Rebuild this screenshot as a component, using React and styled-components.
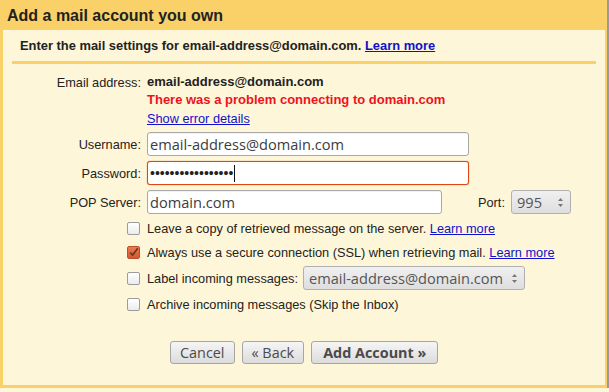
import React from "react";
import styled, { createGlobalStyle } from "styled-components";

const GlobalStyle = createGlobalStyle`
  html, body { margin: 0; padding: 0; background: #fef6d8; }
  body { font-family: "Liberation Sans", Arial, sans-serif; }
`;

const Frame = styled.div`
  width: 609px;
  height: 388px;
  box-sizing: border-box;
  background: #f9d168;
  border-right: 2px solid #9a9a9a;
  display: flex;
  flex-direction: column;
`;

const Header = styled.h1`
  margin: 0;
  height: 30px;
  padding-left: 7px;
  font-size: 16px;
  font-weight: bold;
  line-height: 31px;
  color: #222;
`;

const Panel = styled.div`
  margin: 0 2px 3px 3px;
  flex: 1;
  background: #fef6d8;
  color: #222;
  font-size: 12.75px;
`;

const Intro = styled.div`
  padding: 8px 0 0 17px;
  height: 23px;
  line-height: 16px;
  font-size: 12.9px;
  font-weight: bold;
`;

const Divider = styled.hr`
  margin: 0 9px;
  border: 0;
  height: 3px;
  background: #f9d168;
`;

const Link = styled.a`
  color: #1111cc;
  text-decoration: underline;
  cursor: pointer;
  font-weight: ${({ $bold }) => ($bold ? "bold" : "normal")};
`;

const Form = styled.div`
  display: grid;
  grid-template-columns: 138px auto;
  column-gap: 6px;
  align-items: center;
  padding-top: 9px;
`;

const Label = styled.div`
  text-align: right;
  white-space: nowrap;
`;

const Text = styled.div`
  grid-column: 2;
  height: ${({ $h }) => $h || 18}px;
  line-height: 18px;
  font-size: ${({ $bold }) => ($bold ? "13px" : "inherit")};
  font-weight: ${({ $bold }) => ($bold ? "bold" : "normal")};
  color: ${({ $error }) => ($error ? "#ee1122" : "inherit")};
`;

const FieldRow = styled.div`
  grid-column: 2;
  display: flex;
  align-items: center;
  margin-top: ${({ $top }) => $top || 5}px;
`;

const LabelCell = styled(Label)`
  margin-top: ${({ $top }) => $top || 5}px;
`;

const Field = styled.div`
  box-sizing: border-box;
  width: ${({ $w }) => $w}px;
  height: 24px;
  padding: 0 2px;
  display: flex;
  align-items: center;
  background: #fff;
  border: 1px solid ${({ $focus }) => ($focus ? "#dd4814" : "#a8a8a8")};
  border-radius: 3px;
  box-shadow: ${({ $focus }) => ($focus ? "0 0 1px #dd4814" : "inset 0 1px 1px rgba(0,0,0,0.06)")};
  font-family: "Open Sans", "DejaVu Sans", sans-serif;
  font-size: 14.6px;
  color: #3c3c3c;
`;

const Dots = styled.span`
  font-family: "Liberation Sans", Arial, sans-serif;
  font-size: 14px;
  color: #222;
`;

const Caret = styled.span`
  display: inline-block;
  width: 1px;
  height: 17px;
  margin-left: 1px;
  background: #111;
`;

const PortLabel = styled.span`
  margin: 0 6px 0 36px;
`;

const Select = styled.div`
  box-sizing: border-box;
  width: ${({ $w }) => $w}px;
  height: 24px;
  margin-left: ${({ $ml }) => $ml || 0}px;
  padding: 0 6px 0 5px;
  display: flex;
  align-items: center;
  justify-content: space-between;
  background: linear-gradient(#f0f0f0, #dedede);
  border: 1px solid #b0b0b0;
  border-radius: 3px;
  font-family: "Open Sans", "DejaVu Sans", sans-serif;
  font-size: 14.6px;
  color: #555;
`;

const Options = styled.div`
  display: flex;
  flex-direction: column;
  gap: 4px;
  margin: 4px 0 0 124px;
`;

const CheckRow = styled.label`
  display: flex;
  align-items: center;
  gap: 7px;
  min-height: 20px;
`;

const Box = styled.span`
  box-sizing: border-box;
  width: 13px;
  height: 13px;
  flex: none;
  border-radius: 2px;
  border: 1px solid ${({ $on }) => ($on ? "#b9502a" : "#9c9c9c")};
  background: ${({ $on }) => ($on ? "linear-gradient(#ec7a52, #d9572c)" : "linear-gradient(#ffffff, #ececec)")};
  display: flex;
  align-items: center;
  justify-content: center;
  overflow: visible;
`;

const Actions = styled.div`
  display: flex;
  gap: 7px;
  margin: 27px 0 0 167px;
`;

const Button = styled.button`
  height: 23px;
  padding: 0 ${({ $pad }) => $pad || 9}px;
  border: 1px solid #a6a6a6;
  border-radius: 3px;
  background: linear-gradient(#f5f5f5, #dcdcdc);
  font-family: "Open Sans", "DejaVu Sans", sans-serif;
  font-size: 14.4px;
  font-weight: ${({ $bold }) => ($bold ? "bold" : "normal")};
  color: #4a4a4a;
  line-height: 21px;
  cursor: pointer;
`;

const Arrows = () => (
  <svg width="7" height="11" viewBox="0 0 7 11">
    <path d="M3.5 1 L6 4 L1 4 Z" fill="#777" />
    <path d="M3.5 10 L6 7 L1 7 Z" fill="#777" />
  </svg>
);

const Check = ({ on, children }) => (
  <CheckRow>
    <Box $on={on}>
      {on && (
        <svg width="13" height="13" viewBox="0 0 13 13">
          <path d="M2.5 6.5 L5.5 9.5 L11.5 1.5" fill="none" stroke="#5a3a2a" strokeWidth="2" />
        </svg>
      )}
    </Box>
    <span>{children}</span>
  </CheckRow>
);

export default function App() {
  return (
    <>
      <GlobalStyle />
      <Frame>
        <Header>Add a mail account you own</Header>
        <Panel>
          <Intro>
            Enter the mail settings for email-address@domain.com. <Link $bold>Learn more</Link>
          </Intro>
          <Divider />
          <Form>
            <Label>Email address:</Label>
            <Text $bold>email-address@domain.com</Text>
            <Text $bold $error $h={19}>There was a problem connecting to domain.com</Text>
            <Text>
              <Link>Show error details</Link>
            </Text>

            <LabelCell $top={4}>Username:</LabelCell>
            <FieldRow $top={4}>
              <Field $w={322}>email-address@domain.com</Field>
            </FieldRow>

            <LabelCell>Password:</LabelCell>
            <FieldRow>
              <Field $w={322} $focus>
                <Dots>•••••••••••••••••</Dots>
                <Caret />
              </Field>
            </FieldRow>

            <LabelCell>POP Server:</LabelCell>
            <FieldRow>
              <Field $w={295}>domain.com</Field>
              <PortLabel>Port:</PortLabel>
              <Select $w={60}>
                995
                <Arrows />
              </Select>
            </FieldRow>
          </Form>

          <Options>
            <Check>
              Leave a copy of retrieved message on the server. <Link>Learn more</Link>
            </Check>
            <Check on>
              Always use a secure connection (SSL) when retrieving mail. <Link>Learn more</Link>
            </Check>
            <CheckRow>
              <Box />
              <span>Label incoming messages:</span>
              <Select $w={222} $ml={-2}>
                email-address@domain.com
                <Arrows />
              </Select>
            </CheckRow>
            <Check>Archive incoming messages (Skip the Inbox)</Check>
          </Options>

          <Actions>
            <Button>Cancel</Button>
            <Button>« Back</Button>
            <Button $bold $pad={11}>Add Account »</Button>
          </Actions>
        </Panel>
      </Frame>
    </>
  );
}
